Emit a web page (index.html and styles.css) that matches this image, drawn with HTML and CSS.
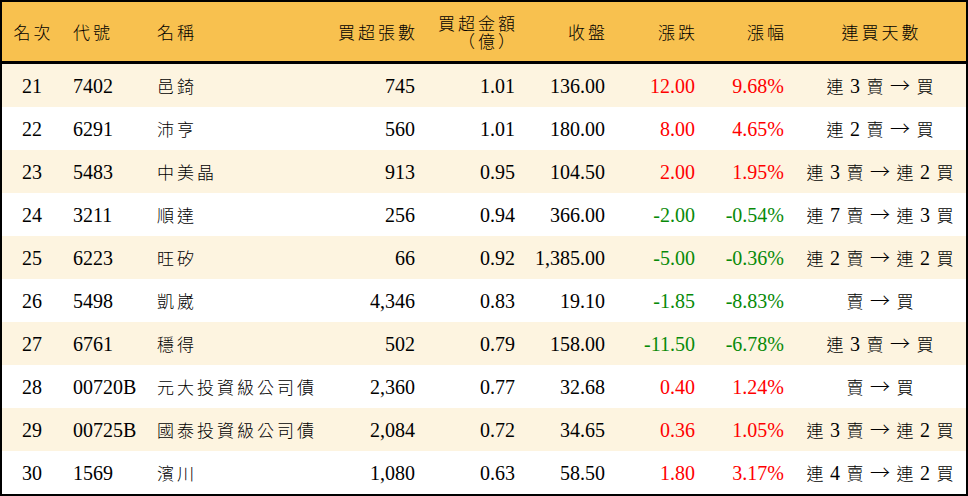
FILE: index.html
```html
<!DOCTYPE html>
<html lang="zh-Hant">
<head>
<meta charset="utf-8">
<title>買超排行</title>
<link rel="stylesheet" href="styles.css">
</head>
<body>
<div class="board">
  <div class="row head">
    <div class="c ctr"><span class="h">名次</span></div>
    <div class="c code"><span class="h">代號</span></div>
    <div class="c name"><span class="h">名稱</span></div>
    <div class="c num"><span class="h">買超張數</span></div>
    <div class="c num two"><div class="hl"><span class="h">買超金額</span></div><div class="hl"><span class="h">（億）</span></div></div>
    <div class="c num"><span class="h">收盤</span></div>
    <div class="c num"><span class="h">漲跌</span></div>
    <div class="c num"><span class="h">漲幅</span></div>
    <div class="c ctr"><span class="h">連買天數</span></div>
  </div>

  <div class="row alt">
    <div class="c ctr">21</div><div class="c code">7402</div><div class="c name"><span class="zh">邑錡</span></div>
    <div class="c num">745</div><div class="c num">1.01</div><div class="c num">136.00</div>
    <div class="c num up">12.00</div><div class="c num up">9.68%</div>
    <div class="c ctr days"><span class="k">連</span> 3 <span class="k">賣</span> <span class="ar">→</span> <span class="k">買</span></div>
  </div>
  <div class="row">
    <div class="c ctr">22</div><div class="c code">6291</div><div class="c name"><span class="zh">沛亨</span></div>
    <div class="c num">560</div><div class="c num">1.01</div><div class="c num">180.00</div>
    <div class="c num up">8.00</div><div class="c num up">4.65%</div>
    <div class="c ctr days"><span class="k">連</span> 2 <span class="k">賣</span> <span class="ar">→</span> <span class="k">買</span></div>
  </div>
  <div class="row alt">
    <div class="c ctr">23</div><div class="c code">5483</div><div class="c name"><span class="zh">中美晶</span></div>
    <div class="c num">913</div><div class="c num">0.95</div><div class="c num">104.50</div>
    <div class="c num up">2.00</div><div class="c num up">1.95%</div>
    <div class="c ctr days"><span class="k">連</span> 3 <span class="k">賣</span> <span class="ar">→</span> <span class="k">連</span> 2 <span class="k">買</span></div>
  </div>
  <div class="row">
    <div class="c ctr">24</div><div class="c code">3211</div><div class="c name"><span class="zh">順達</span></div>
    <div class="c num">256</div><div class="c num">0.94</div><div class="c num">366.00</div>
    <div class="c num down">-2.00</div><div class="c num down">-0.54%</div>
    <div class="c ctr days"><span class="k">連</span> 7 <span class="k">賣</span> <span class="ar">→</span> <span class="k">連</span> 3 <span class="k">買</span></div>
  </div>
  <div class="row alt">
    <div class="c ctr">25</div><div class="c code">6223</div><div class="c name"><span class="zh">旺矽</span></div>
    <div class="c num">66</div><div class="c num">0.92</div><div class="c num">1,385.00</div>
    <div class="c num down">-5.00</div><div class="c num down">-0.36%</div>
    <div class="c ctr days"><span class="k">連</span> 2 <span class="k">賣</span> <span class="ar">→</span> <span class="k">連</span> 2 <span class="k">買</span></div>
  </div>
  <div class="row">
    <div class="c ctr">26</div><div class="c code">5498</div><div class="c name"><span class="zh">凱崴</span></div>
    <div class="c num">4,346</div><div class="c num">0.83</div><div class="c num">19.10</div>
    <div class="c num down">-1.85</div><div class="c num down">-8.83%</div>
    <div class="c ctr days"><span class="k">賣</span> <span class="ar">→</span> <span class="k">買</span></div>
  </div>
  <div class="row alt">
    <div class="c ctr">27</div><div class="c code">6761</div><div class="c name"><span class="zh">穩得</span></div>
    <div class="c num">502</div><div class="c num">0.79</div><div class="c num">158.00</div>
    <div class="c num down">-11.50</div><div class="c num down">-6.78%</div>
    <div class="c ctr days"><span class="k">連</span> 3 <span class="k">賣</span> <span class="ar">→</span> <span class="k">買</span></div>
  </div>
  <div class="row">
    <div class="c ctr">28</div><div class="c code">00720B</div><div class="c name"><span class="zh">元大投資級公司債</span></div>
    <div class="c num">2,360</div><div class="c num">0.77</div><div class="c num">32.68</div>
    <div class="c num up">0.40</div><div class="c num up">1.24%</div>
    <div class="c ctr days"><span class="k">賣</span> <span class="ar">→</span> <span class="k">買</span></div>
  </div>
  <div class="row alt">
    <div class="c ctr">29</div><div class="c code">00725B</div><div class="c name"><span class="zh">國泰投資級公司債</span></div>
    <div class="c num">2,084</div><div class="c num">0.72</div><div class="c num">34.65</div>
    <div class="c num up">0.36</div><div class="c num up">1.05%</div>
    <div class="c ctr days"><span class="k">連</span> 3 <span class="k">賣</span> <span class="ar">→</span> <span class="k">連</span> 2 <span class="k">買</span></div>
  </div>
  <div class="row">
    <div class="c ctr">30</div><div class="c code">1569</div><div class="c name"><span class="zh">濱川</span></div>
    <div class="c num">1,080</div><div class="c num">0.63</div><div class="c num">58.50</div>
    <div class="c num up">1.80</div><div class="c num up">3.17%</div>
    <div class="c ctr days"><span class="k">連</span> 4 <span class="k">賣</span> <span class="ar">→</span> <span class="k">連</span> 2 <span class="k">買</span></div>
  </div>
</div>
</body>
</html>
```
FILE: styles.css
```css
* { box-sizing: border-box; }
html, body { margin: 0; padding: 0; background: #fff; }

.board {
  width: 968px;
  height: 496px;
  border: 2px solid #000;
  font-family: "Liberation Serif", "Noto Sans CJK TC", serif;
  font-size: 20px;
  color: #000;
  overflow: hidden;
}

.row {
  display: grid;
  grid-template-columns: 60px 88px 180px 95px 100px 90px 90px 89px 172px;
  height: 43px;
  align-items: center;
  background: #fff;
}
.row.alt { background: #fdf4e0; }

.row.head {
  height: 62px;
  background: #f8c14f;
  border-bottom: 3px solid #000;
}

.c { white-space: nowrap; line-height: 22px; }
.ctr { text-align: center; }
.code { padding-left: 11px; }
.name { padding-left: 7px; }
.num { text-align: right; padding-right: 10px; }

.two { line-height: 18px; }
.two .hl { height: 18px; }
.two .h { line-height: 18px; }

.h {
  font-family: "Noto Sans CJK TC", sans-serif;
  font-size: 17px;
  font-weight: 300;
  letter-spacing: 3px;
  margin-right: -3px;
}

.zh {
  font-family: "Noto Sans CJK TC", sans-serif;
  font-size: 17px;
  font-weight: 300;
  letter-spacing: 3px;
}

.days { word-spacing: 1.5px; }
.k {
  font-family: "Noto Sans CJK TC", sans-serif;
  font-size: 17px;
  font-weight: 300;
}
.ar {
  font-family: "Noto Sans CJK TC", sans-serif;
  font-size: 20px;
  font-weight: 300;
}

.up { color: #ff0000; }
.down { color: #088a08; }
```
